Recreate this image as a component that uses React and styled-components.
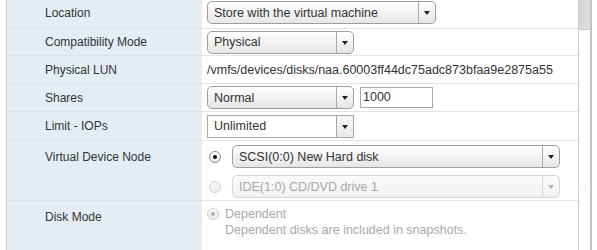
import React from "react";
import styled, { createGlobalStyle } from "styled-components";

const GlobalStyle = createGlobalStyle`
  html, body {
    margin: 0;
    padding: 0;
    background: #ffffff;
    overflow: hidden;
  }
  body {
    font-family: "Liberation Sans", Arial, sans-serif;
    font-size: 12px;
    color: #333333;
  }
`;

const Page = styled.div`
  display: flex;
  height: 250px;
  padding-left: 6px;
  background: #ffffff;
  overflow: hidden;
`;

// the form is scrolled a little, so the first row is cut at the top
const Form = styled.div`
  flex: 1;
  border-left: 1px solid #c9c9c9;
  display: flex;
  flex-direction: column;
  margin-top: -3px;
  overflow: hidden;
`;

const Row = styled.div`
  display: grid;
  grid-template-columns: 195px 1fr;
  height: ${p => p.h}px;
  box-sizing: border-box;
  border-bottom: ${p => (p.last ? "none" : "1px solid #e2e6ea")};
  flex-shrink: 0;
`;

const Label = styled.div`
  background: #e4edf4;
  padding-left: 38px;
  display: flex;
  align-items: ${p => (p.top ? "flex-start" : "center")};
  padding-top: ${p => (p.top ? "9px" : "0")};
  box-sizing: border-box;
  border-bottom: 1px solid #d9e2ea;
  margin-bottom: -1px;
`;

const Value = styled.div`
  padding-left: 5px;
  display: flex;
  flex-direction: ${p => (p.column ? "column" : "row")};
  align-items: ${p => (p.column ? "stretch" : "center")};
  gap: ${p => p.gap || 0}px;
  padding-top: ${p => p.pt || 0}px;
  padding-bottom: ${p => p.pb || 0}px;
  box-sizing: border-box;
`;

const SelectBox = styled.div`
  width: ${p => p.w}px;
  height: 23px;
  box-sizing: border-box;
  display: flex;
  align-items: center;
  border: 1px solid ${p => (p.disabled ? "#d6d6d6" : p.flat ? "#a9a9a9" : "#9e9e9e")};
  border-radius: ${p => (p.flat ? "0" : "5px")};
  background: ${p =>
    p.disabled
      ? "linear-gradient(#fbfbfb, #f1f1f1)"
      : p.flat
      ? "#ffffff"
      : "linear-gradient(#ffffff, #e6e6e6)"};
  color: ${p => (p.disabled ? "#a8a8a8" : "#333333")};
  font-size: 12.5px;
`;

const SelectText = styled.span`
  flex: 1;
  padding-left: 6px;
  white-space: nowrap;
  overflow: hidden;
`;

const ArrowButton = styled.span`
  width: 17px;
  height: 100%;
  border-left: 1px solid ${p => (p.disabled ? "#d6d6d6" : "#a9a9a9")};
  display: flex;
  align-items: center;
  justify-content: center;
  background: ${p => (p.flat ? "linear-gradient(#f7f7f7, #e9e9e9)" : "transparent")};
  box-sizing: border-box;
  &::after {
    content: "";
    border-left: 3.5px solid transparent;
    border-right: 3.5px solid transparent;
    border-top: 4px solid ${p => (p.disabled ? "#b5b5b5" : "#222222")};
    margin-top: 1px;
  }
`;

const TextField = styled.div`
  width: 73px;
  height: 21px;
  box-sizing: border-box;
  border: 1px solid #a9a9a9;
  background: #ffffff;
  padding: 2px 0 0 2px;
  font-size: 12.5px;
  margin-left: 6px;
  margin-top: -1px;
`;

const PlainText = styled.span`
  font-size: 12.5px;
  white-space: nowrap;
`;

const NodeLine = styled.div`
  display: flex;
  align-items: center;
  height: 23px;
  gap: 11px;
  padding-left: 2px;
`;

const Radio = styled.span`
  width: 12px;
  height: 12px;
  box-sizing: border-box;
  border-radius: 50%;
  border: 1px solid ${p => (p.disabled ? "#cfcfcf" : "#8a8a8a")};
  background: ${p => (p.disabled ? "linear-gradient(#f8f8f8, #ececec)" : "linear-gradient(#ffffff, #e8e8e8)")};
  display: flex;
  align-items: center;
  justify-content: center;
  flex-shrink: 0;
  margin-top: ${p => p.mt || 0}px;
  &::after {
    content: "";
    display: ${p => (p.checked ? "block" : "none")};
    width: 4px;
    height: 4px;
    border-radius: 50%;
    background: ${p => (p.disabled ? "#b0b0b0" : "#111111")};
  }
`;

const Choice = styled.div`
  display: flex;
  gap: 6px;
  color: #a8a8a8;
  font-size: 12.5px;
  line-height: 16px;
`;

const ChoiceBody = styled.div`
  display: flex;
  flex-direction: column;
`;

const Scrollbar = styled.div`
  width: 11px;
  border-left: 1px solid #cccccc;
  border-right: 2px solid #c4c4c4;
  display: flex;
  flex-direction: column;
  align-items: center;
  background: #ffffff;
`;

const Thumb = styled.div`
  width: 100%;
  height: 29px;
  background: linear-gradient(90deg, #d6d6d6, #dedede);
  border-bottom: 1px solid #c8c8c8;
`;

const Grip = styled.div`
  margin-top: 155px;
  color: #a0a0a0;
  font-size: 7px;
  line-height: 4px;
  letter-spacing: 1px;
`;

const Gutter = styled.div`
  width: 5px;
  background: #ffffff;
`;

function Select({ w, value, flat, disabled }) {
  return (
    <SelectBox w={w} flat={flat} disabled={disabled}>
      <SelectText>{value}</SelectText>
      <ArrowButton flat={flat} disabled={disabled} />
    </SelectBox>
  );
}

export default function App() {
  return (
    <>
      <GlobalStyle />
      <Page>
        <Form>
          <Row h={32}>
            <Label>Location</Label>
            <Value>
              <Select w={229} value="Store with the virtual machine" />
            </Value>
          </Row>
          <Row h={27}>
            <Label>Compatibility Mode</Label>
            <Value>
              <Select w={147} value="Physical" />
            </Value>
          </Row>
          <Row h={28}>
            <Label>Physical LUN</Label>
            <Value>
              <PlainText>/vmfs/devices/disks/naa.60003ff44dc75adc873bfaa9e2875a55</PlainText>
            </Value>
          </Row>
          <Row h={28}>
            <Label>Shares</Label>
            <Value>
              <Select w={147} value="Normal" />
              <TextField>1000</TextField>
            </Value>
          </Row>
          <Row h={29}>
            <Label>Limit - IOPs</Label>
            <Value>
              <Select w={147} value="Unlimited" flat />
            </Value>
          </Row>
          <Row h={60}>
            <Label top>Virtual Device Node</Label>
            <Value column gap={7} pt={4}>
              <NodeLine>
                <Radio checked />
                <Select w={328} value="SCSI(0:0) New Hard disk" />
              </NodeLine>
              <NodeLine>
                <Radio disabled />
                <Select w={328} value="IDE(1:0) CD/DVD drive 1" disabled />
              </NodeLine>
            </Value>
          </Row>
          <Row h={60} last>
            <Label top>Disk Mode</Label>
            <Value column gap={12} pt={5}>
              <Choice>
                <Radio checked disabled mt={2} />
                <ChoiceBody>
                  <span>Dependent</span>
                  <span>Dependent disks are included in snapshots.</span>
                </ChoiceBody>
              </Choice>
              <Choice>
                <Radio disabled mt={2} />
              </Choice>
            </Value>
          </Row>
        </Form>
        <Scrollbar>
          <Thumb />
          <Grip>::</Grip>
        </Scrollbar>
        <Gutter />
      </Page>
    </>
  );
}
